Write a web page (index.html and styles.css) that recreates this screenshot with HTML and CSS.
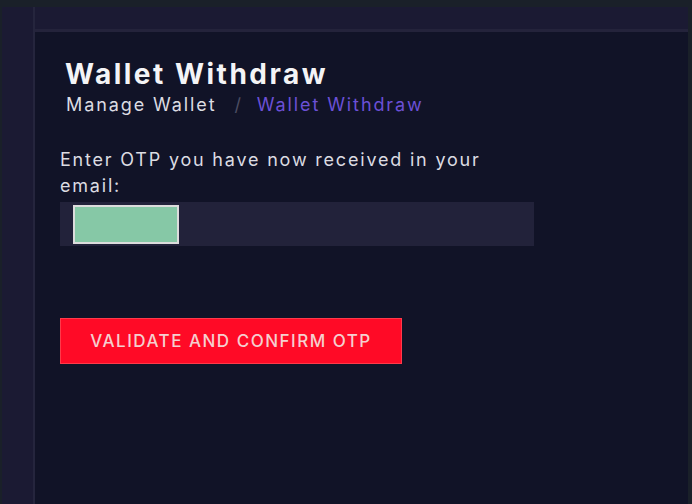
FILE: index.html
```html
<!DOCTYPE html>
<html>
<head>
<meta charset="utf-8">
<link rel="stylesheet" href="styles.css">
</head>
<body>
<div class="topstrip"></div>
<div class="frame">
  <aside class="sidebar"></aside>
  <div class="right">
    <header class="header"></header>
    <main class="main">
      <h1 class="title">Wallet Withdraw</h1>
      <nav class="crumbs"><span class="crumb">Manage Wallet</span><span class="sep">/</span><span class="crumb active">Wallet Withdraw</span></nav>
      <form class="form">
        <label class="label">Enter OTP you have now received in your email:</label>
        <div class="inputbox"><div class="otp"></div></div>
        <button type="button" class="btn">VALIDATE AND CONFIRM OTP</button>
      </form>
    </main>
  </div>
</div>
</body>
</html>
```
FILE: styles.css
```css
html, body {
  margin: 0;
  padding: 0;
  height: 100%;
  background: #1a2029;
  font-family: Inter, "Noto Sans", sans-serif;
  overflow: hidden;
}
.topstrip {
  height: 7px;
  background: #1a2029;
}
.frame {
  display: flex;
  height: 497px;
  margin-left: 2px;
  margin-right: 4px;
}
.sidebar {
  width: 31px;
  background: #1b1a33;
  border-right: 2px solid #25253d;
}
.right {
  flex: 1;
  display: flex;
  flex-direction: column;
}
.header {
  height: 22px;
  background: #1b1a33;
  border-bottom: 3px solid #24233b;
}
.main {
  flex: 1;
  background: #111327;
  padding: 25px 0 0 25px;
  box-sizing: border-box;
}
.title {
  margin: 0 0 0 5px;
  font-size: 28px;
  font-weight: 700;
  color: #f4f4f6;
  line-height: 34px;
  letter-spacing: 2.5px;
}
.crumbs {
  margin: 2px 0 0 6px;
  font-size: 18px;
  line-height: 24px;
  color: #dcdce2;
  letter-spacing: 1.9px;
}
.sep {
  color: #4c4d62;
  margin: 0 14px 0 18px;
}
.active {
  color: #6b50d6;
}
.form {
  margin-top: 30px;
  width: 474px;
}
.label {
  display: block;
  font-size: 18px;
  line-height: 26px;
  color: #dcdce2;
  letter-spacing: 1.8px;
}
.inputbox {
  margin-top: 3px;
  height: 44px;
  background: #22223a;
  display: flex;
  align-items: center;
  padding-left: 13px;
}
.otp {
  width: 102px;
  height: 35px;
  background: #86c8a6;
  border: 2px solid #dcdcdc;
}
.btn {
  margin-top: 72px;
  width: 342px;
  height: 46px;
  background: #ff0a26;
  border: 1px solid #ff3a4a;
  color: #f5cfcf;
  font-family: Inter, "Noto Sans", sans-serif;
  font-size: 17px;
  font-weight: 500;
  letter-spacing: 1.5px;
  padding: 0;
  cursor: pointer;
}
```
